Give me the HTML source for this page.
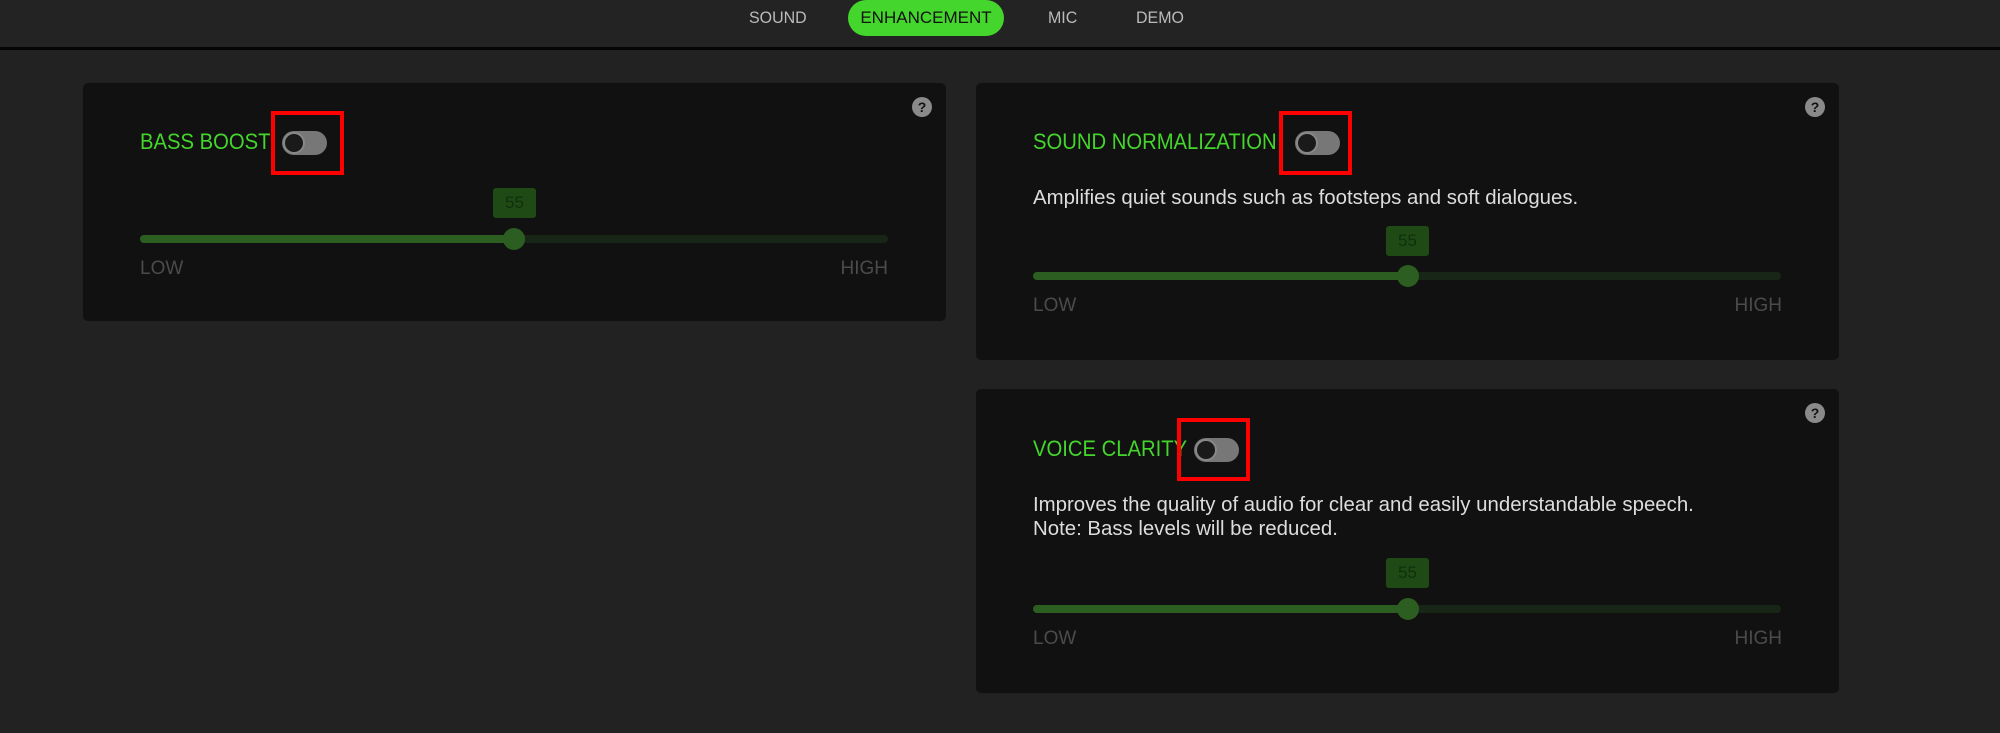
<!DOCTYPE html>
<html><head><meta charset="utf-8"><style>
*{margin:0;padding:0;box-sizing:border-box}
body{width:2000px;height:733px;background:#222;position:relative;overflow:hidden;font-family:"Liberation Sans Narrow","Liberation Sans",sans-serif}
.hdr{position:absolute;left:0;top:0;width:2000px;height:50px;background:#232323;border-bottom:3px solid #050505}
.tab{position:absolute;top:0;height:36px;line-height:36px;font-size:17px;color:#bbb;transform:scaleX(0.94);transform-origin:left}
.pill{background:#44d62c;color:#111;border-radius:18px;text-align:center;transform:none}
.card{position:absolute;background:#111;border-radius:5px}
.title{position:absolute;color:#44d62c;font-size:22px;line-height:26px;transform:scaleX(0.92);transform-origin:left;white-space:nowrap}
.tog{position:absolute;width:45px;height:24px;border-radius:12px;background:#777}
.tog::after{content:"";position:absolute;left:1px;top:1px;width:22px;height:22px;border-radius:50%;background:#1a1a1a;border:2px solid #888;box-sizing:border-box}
.red{position:absolute;border:4px solid #f00}
.q{position:absolute;width:20px;height:20px;border-radius:50%;background:#8a8a8a;color:#111;font:bold 14px/20px "Liberation Sans",sans-serif;text-align:center}
.desc{position:absolute;color:#ddd;font-size:20.4px;line-height:24px;white-space:nowrap}
.bub{position:absolute;width:43px;height:30px;background:#1f4a16;border-radius:3px;color:#10300c;font-size:17px;line-height:30px;text-align:center}
.trk{position:absolute;width:748px;height:8px;border-radius:4px;background:#172617}
.trk .f{position:absolute;left:0;top:0;height:8px;border-radius:4px;background:#2b5e20}
.trk .t{position:absolute;top:-7px;width:22px;height:22px;border-radius:50%;background:#2b5e20}
.lo,.hi{position:absolute;color:#4b4b4b;font-size:19px;line-height:22px}
</style></head><body>
<div class="hdr"></div>
<div class="tab" style="left:749px">SOUND</div>
<div class="tab pill" style="left:848px;width:156px">ENHANCEMENT</div>
<div class="tab" style="left:1048px">MIC</div>
<div class="tab" style="left:1136px">DEMO</div>

<div class="card" style="left:83px;top:83px;width:863px;height:238px"></div>
<div class="q" style="left:912px;top:97px">?</div>
<div class="title" style="left:140px;top:129px">BASS BOOST</div>
<div class="tog" style="left:282px;top:131px"></div>
<div class="red" style="left:271px;top:111px;width:73px;height:64px"></div>
<div class="bub" style="left:493px;top:188px">55</div>
<div class="trk" style="left:140px;top:235px"><div class="f" style="width:374px"></div><div class="t" style="left:363px"></div></div>
<div class="lo" style="left:140px;top:258px">LOW</div>
<div class="hi" style="left:888px;top:258px;transform:translateX(-100%)">HIGH</div>

<div class="card" style="left:976px;top:83px;width:863px;height:277px"></div>
<div class="q" style="left:1805px;top:97px">?</div>
<div class="title" style="left:1033px;top:129px">SOUND NORMALIZATION</div>
<div class="tog" style="left:1295px;top:131px"></div>
<div class="red" style="left:1279px;top:111px;width:73px;height:64px"></div>
<div class="desc" style="left:1033px;top:186px">Amplifies quiet sounds such as footsteps and soft dialogues.</div>
<div class="bub" style="left:1386px;top:226px">55</div>
<div class="trk" style="left:1033px;top:272px"><div class="f" style="width:375px"></div><div class="t" style="left:364px"></div></div>
<div class="lo" style="left:1033px;top:295px">LOW</div>
<div class="hi" style="left:1782px;top:295px;transform:translateX(-100%)">HIGH</div>

<div class="card" style="left:976px;top:389px;width:863px;height:304px"></div>
<div class="q" style="left:1805px;top:403px">?</div>
<div class="title" style="left:1033px;top:436px">VOICE CLARITY</div>
<div class="tog" style="left:1194px;top:438px"></div>
<div class="red" style="left:1177px;top:418px;width:73px;height:63px"></div>
<div class="desc" style="left:1033px;top:493px">Improves the quality of audio for clear and easily understandable speech.<br>Note: Bass levels will be reduced.</div>
<div class="bub" style="left:1386px;top:558px">55</div>
<div class="trk" style="left:1033px;top:605px"><div class="f" style="width:375px"></div><div class="t" style="left:364px"></div></div>
<div class="lo" style="left:1033px;top:628px">LOW</div>
<div class="hi" style="left:1782px;top:628px;transform:translateX(-100%)">HIGH</div>
</body></html>
